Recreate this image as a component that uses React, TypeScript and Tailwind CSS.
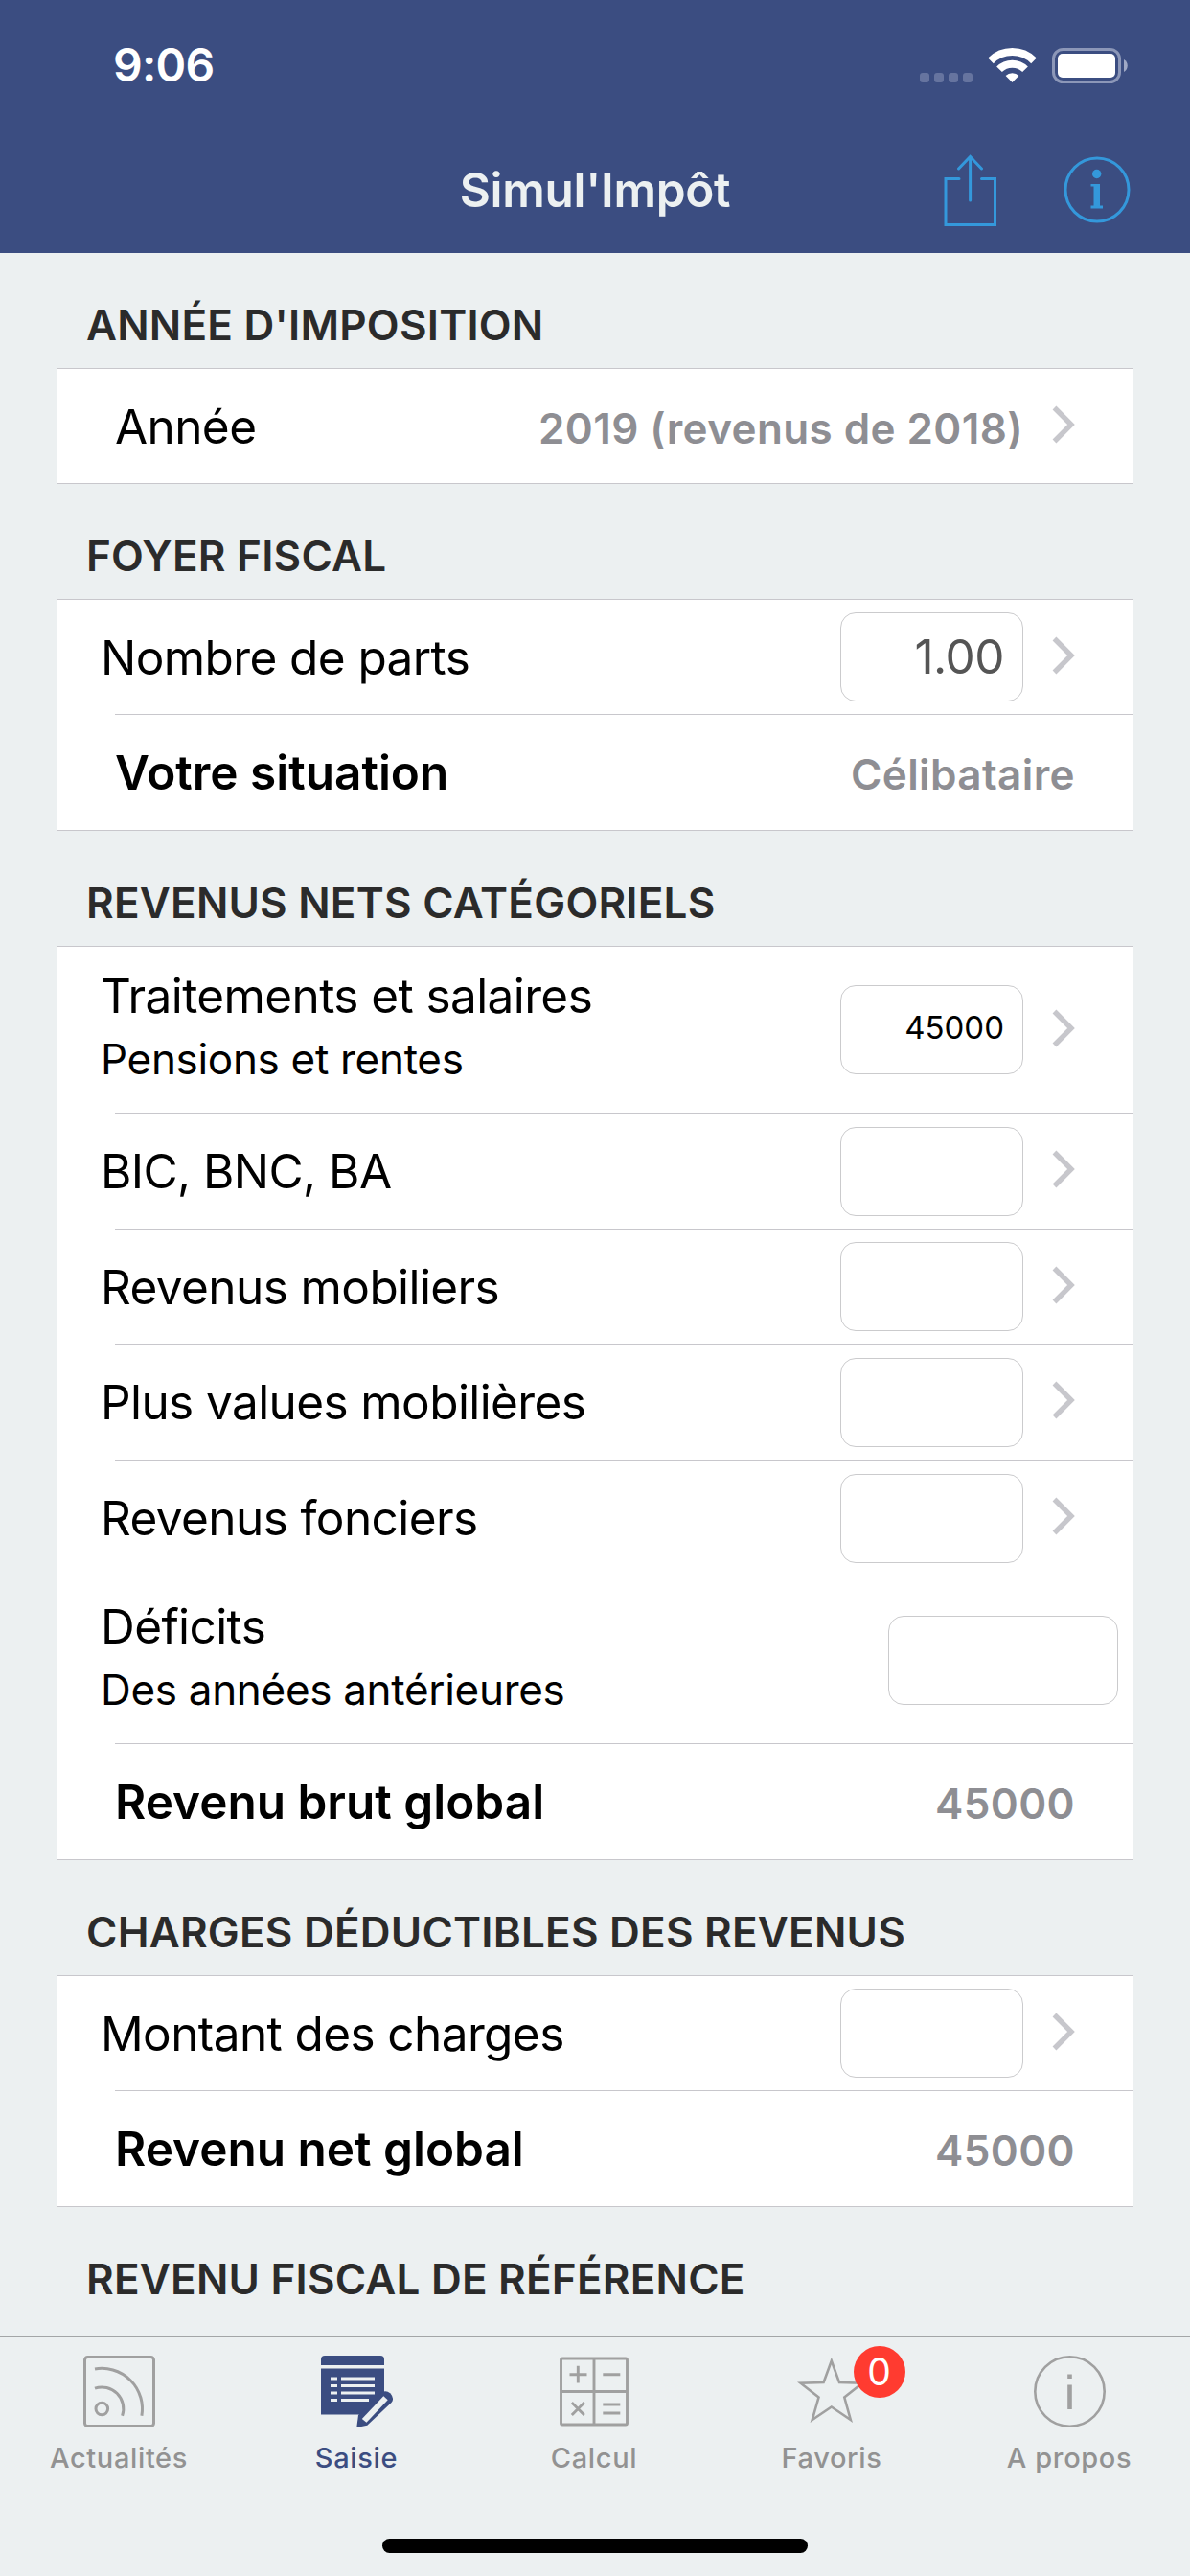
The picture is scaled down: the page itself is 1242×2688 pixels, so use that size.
import React from 'react';

interface RowData {
  label: string;
  sub?: string;
  value?: string;
  input?: string;
  bold?: boolean;
  wide?: boolean;
  chevron?: boolean;
  small?: boolean;
  height: string;
}

interface SectionData {
  title: string;
  rows: RowData[];
}

const SECTIONS: SectionData[] = [
  {
    title: "ANNÉE D'IMPOSITION",
    rows: [{ label: 'Année', value: '2019 (revenus de 2018)', chevron: true, height: 'h-[119px]' }],
  },
  {
    title: 'FOYER FISCAL',
    rows: [
      { label: 'Nombre de parts', input: '1.00', chevron: true, height: 'h-[119px]' },
      { label: 'Votre situation', value: 'Célibataire', bold: true, height: 'h-[120px]' },
    ],
  },
  {
    title: 'REVENUS NETS CATÉGORIELS',
    rows: [
      { label: 'Traitements et salaires', sub: 'Pensions et rentes', input: '45000', small: true, chevron: true, height: 'h-[173px]' },
      { label: 'BIC, BNC, BA', input: '', chevron: true, height: 'h-[120px]' },
      { label: 'Revenus mobiliers', input: '', chevron: true, height: 'h-[119px]' },
      { label: 'Plus values mobilières', input: '', chevron: true, height: 'h-[120px]' },
      { label: 'Revenus fonciers', input: '', chevron: true, height: 'h-[120px]' },
      { label: 'Déficits', sub: 'Des années antérieures', input: '', wide: true, height: 'h-[174px]' },
      { label: 'Revenu brut global', value: '45000', bold: true, height: 'h-[120px]' },
    ],
  },
  {
    title: 'CHARGES DÉDUCTIBLES DES REVENUS',
    rows: [
      { label: 'Montant des charges', input: '', chevron: true, height: 'h-[119px]' },
      { label: 'Revenu net global', value: '45000', bold: true, height: 'h-[120px]' },
    ],
  },
  { title: 'REVENU FISCAL DE RÉFÉRENCE', rows: [] },
];

function Chevron() {
  return (
    <svg className="w-[24px] h-[40px] shrink-0 -mt-[4px]" viewBox="0 0 24 40" fill="none">
      <path d="M2.5 2.5L20 20L2.5 37.5" stroke="#c7c7cc" strokeWidth="5.4" />
    </svg>
  );
}

function Row({ row }: { row: RowData }) {
  const isInput = row.input !== undefined;
  return (
    <div className={`flex items-center ${row.height} ${isInput ? 'pl-[45px]' : 'pl-[60px]'} ${row.wide ? 'pr-[15px]' : 'pr-[60px]'}`}>
      <div className="flex-1 flex flex-col text-black whitespace-nowrap">
        <span
          className={
            row.bold
              ? 'text-[49.5px] leading-[66px] font-semibold'
              : 'text-[49.5px] leading-[66px] tracking-[-0.012em]'
          }
        >
          {row.label}
        </span>
        {row.sub && <span className="text-[44px] leading-[66px] pb-[5px] tracking-[-0.007em]">{row.sub}</span>}
      </div>
      {row.value && (
        <span className="pt-[4px] text-[44px] leading-[60px] font-semibold tracking-[0.009em] text-[#8e8e93] whitespace-nowrap">
          {row.value}
        </span>
      )}
      {isInput && (
        <div
          className={`flex items-center justify-end h-[93px] border border-[#cbcbcd] rounded-[16px] pr-[19px] ${
            row.wide ? 'w-[240px]' : 'w-[191px]'
          }`}
        >
          {row.small ? (
            <span className="text-[33px] leading-[40px] -mt-[6px] text-black">{row.input}</span>
          ) : (
            <span className="text-[49.5px] leading-[60px] -mt-[2px] text-[#555555] tracking-[-0.01em]">{row.input}</span>
          )}
        </div>
      )}
      {row.chevron && (
        <div className="pl-[30px] flex">
          <Chevron />
        </div>
      )}
    </div>
  );
}

function Section({ section }: { section: SectionData }) {
  return (
    <section>
      <h2 className="h-[120px] pt-[30px] pl-[90px] flex items-center text-[44px] font-semibold text-[#2b2b2b] tracking-[0.005em] whitespace-nowrap">
        {section.title}
      </h2>
      {section.rows.length > 0 && (
        <div className="mx-[60px] bg-white border-y border-[#c8c7cc]">
          {section.rows.map((row, i) => (
            <React.Fragment key={row.label}>
              {i > 0 && <div className="ml-[60px] h-px bg-[#c8c7cc]" />}
              <Row row={row} />
            </React.Fragment>
          ))}
        </div>
      )}
    </section>
  );
}

function Header() {
  return (
    <header className="h-[264px] shrink-0 bg-[#3b4d81] flex flex-col">
      <div className="h-[132px] pl-[118px] pr-[65px] pt-[4px] flex items-center justify-between">
        <span className="text-[48px] leading-[60px] font-semibold text-white tracking-[-0.015em]">9:06</span>
        <svg className="w-[217px] h-[37px]" viewBox="0 0 217 37" fill="none">
          {/* Empty signal dots */}
          <g fill="#66749f">
            <rect x="0" y="26" width="10" height="10" rx="3" />
            <rect x="15" y="26" width="10" height="10" rx="3" />
            <rect x="30" y="26" width="10" height="10" rx="3" />
            <rect x="45" y="26" width="10" height="10" rx="3" />
          </g>
          <g stroke="#fff" strokeWidth="8">
            <path d="M74 13.3A32 32 0 0 1 119 13.3" />
            <path d="M83 22.3A19 19 0 0 1 110 22.3" />
          </g>
          <path d="M96.500 36L89.600 29A9.800 9.800 0 0 1 103.400 29Z" fill="#fff" />
          <rect x="139.500" y="1.500" width="69" height="34" rx="10" stroke="#8c97b8" strokeWidth="3" />
          <rect x="144" y="6" width="60" height="25" rx="5" fill="#fff" />
          <path d="M213 12C218 14.500 218 22.500 213 25Z" fill="#a0a9c5" />
        </svg>
      </div>
      <div className="h-[132px] grid grid-cols-[1fr_auto_1fr] items-center pr-[62px]">
        <div className="pl-[62px]" />
        <h1 className="text-[49.5px] leading-[60px] font-semibold text-[#ecf0f1] pl-[62px] tracking-[-0.006em]">Simul'Impôt</h1>
        <div className="flex justify-end items-center gap-[69px]">
          <svg className="w-[56px] h-[76px] mt-[2px]" viewBox="0 0 56 76" fill="none" stroke="#3498db" strokeWidth="3" strokeLinecap="round">
            <path d="M16 25.500H2V73.500H53.500V25.500H39.500" />
            <path d="M27.600 48V2.500M15.500 15L27.600 2.500L39.500 15" />
          </svg>
          <svg className="w-[70px] h-[70px]" viewBox="0 0 70 70">
            <circle cx="35" cy="35" r="33" fill="none" stroke="#3498db" strokeWidth="3" />
            <circle cx="34.700" cy="18.500" r="4.700" fill="#3498db" />
            <path d="M28.500 29H38V51.500H41V54.500H28.500V51.500H31.500V31.500H28.500Z" fill="#3498db" />
          </svg>
        </div>
      </div>
    </header>
  );
}

function NewsIcon() {
  return (
    <svg className="w-[75px] h-[75px]" viewBox="0 0 75 75" fill="none" stroke="#a0a0a0" strokeWidth="3">
      <rect x="1.500" y="1.500" width="72" height="72" rx="3" />
      <circle cx="19.300" cy="55.500" r="6.300" />
      <path d="M12 34.200A22.500 22.500 0 0 1 40.600 62.800M12 14A42.200 42.200 0 0 1 60.900 62.800" />
    </svg>
  );
}

function FormIcon() {
  return (
    <svg className="w-[75px] h-[75px]" viewBox="0 0 75 75">
      <path d="M0 10V4Q0 0 4 0H62Q66 0 66 4V10Z" fill="#3b4d81" />
      <path d="M0 13.500H66V38L43 61.500H0Z" fill="#3b4d81" />
      <g stroke="#ecf0f1" strokeWidth="3">
        <path d="M10 24H17M10 31.500H17M10 39H17M10 46.500H17" />
        <path d="M21 24H56M21 31.500H56M21 39H56M21 46.500H50" />
      </g>
      <path d="M37.300 75L39 62L63.300 38.800Q67.500 35.500 72.500 39.500Q77 45 73.500 49L48.300 72.700Z" fill="#3b4d81" />
      <path d="M42.800 66L65.300 42.300L69.700 46.300L47.500 69.700Z" fill="#ecf0f1" />
    </svg>
  );
}

function CalcIcon() {
  return (
    <svg className="w-[75px] h-[75px]" viewBox="0 0 75 75" fill="none" stroke="#a0a0a0" strokeWidth="2.900">
      <rect x="2.500" y="3" width="69" height="69" rx="1.500" />
      <path d="M37 3V72M3 37.500H71" />
      <path d="M11.500 19.700H29.500M20.300 10.800V28.500M46.300 19.700H64.300M46.300 51H64.300M46.300 60H64.300M13.800 49L26.800 62M26.800 49L13.800 62" />
    </svg>
  );
}

function StarIcon() {
  return (
    <svg className="w-[75px] h-[75px]" viewBox="0 0 75 75" fill="none" stroke="#a0a0a0" strokeWidth="2.600">
      <path d="M36.800 5.500L45 28L69 28.800L50.300 43.500L56.800 67L36.800 53.500L16.800 67L23.500 43.500L4.600 28.800L28.600 28Z" />
    </svg>
  );
}

function InfoIcon() {
  return (
    <svg className="w-[75px] h-[75px]" viewBox="0 0 75 75">
      <circle cx="37.500" cy="37.500" r="36.200" fill="none" stroke="#a0a0a0" strokeWidth="2.600" />
      <path d="M35.200 19.500H39.800V24H35.200ZM35.200 30.500H39.800V56H35.200Z" fill="#a0a0a0" />
    </svg>
  );
}

const TABS = [
  { label: 'Actualités', icon: NewsIcon },
  { label: 'Saisie', icon: FormIcon, active: true },
  { label: 'Calcul', icon: CalcIcon },
  { label: 'Favoris', icon: StarIcon, badge: '0' },
  { label: 'A propos', icon: InfoIcon },
];

function TabBar() {
  return (
    <nav className="h-[250px] shrink-0 bg-[#ecf0f1] border-t border-[#a3a6a7] flex flex-col">
      <div className="grid grid-cols-[repeat(5,248px)] h-[210px] pt-[19px]">
        {TABS.map(({ label, icon: Icon, active, badge }) => (
          <div key={label} className="flex flex-col items-center">
            <div className="relative h-[75px]">
              <Icon />
              {badge && (
                <span className="absolute left-[60px] -top-[10px] w-[54px] h-[54px] rounded-full bg-[#ff3b30] text-white text-[39px] leading-[54px] text-center">
                  {badge}
                </span>
              )}
            </div>
            <span
              className={`mt-[14px] text-[29px] leading-[36px] font-medium tracking-[0.022em] whitespace-nowrap ${
                active ? 'text-[#3b4d81]' : 'text-[#929292]'
              }`}
            >
              {label}
            </span>
          </div>
        ))}
      </div>
      <div className="self-center w-[444px] h-[15px] rounded-full bg-black" />
    </nav>
  );
}

export default function App() {
  return (
    <div className="w-[1242px] h-[2688px] flex flex-col overflow-hidden bg-[#ecf0f1] font-['Inter',sans-serif]">
      <Header />
      <main className="flex-1 min-h-0 overflow-hidden">
        {SECTIONS.map((section) => (
          <Section key={section.title} section={section} />
        ))}
      </main>
      <TabBar />
    </div>
  );
}
